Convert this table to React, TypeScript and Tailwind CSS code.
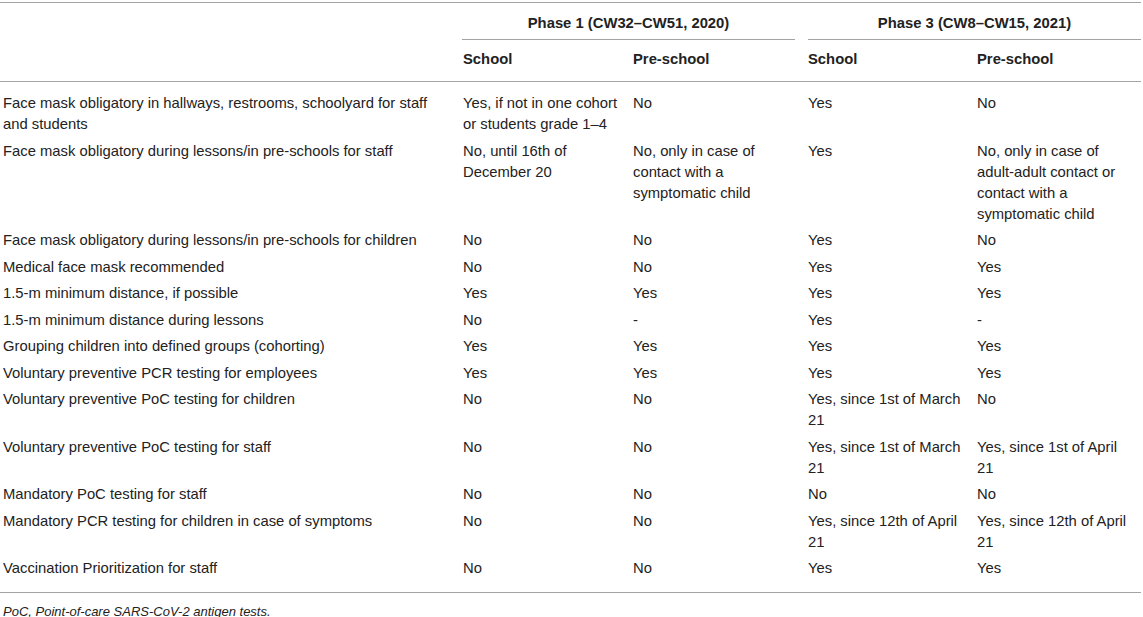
const cols = 'grid grid-cols-[460px_170px_175px_169px_167px]';

// right padding per column, so that lines wrap where the source wraps
const pads = ['pl-[3px] pr-[12px]', 'pl-[3px] pr-[8px]', 'pl-[3px] pr-[13px]', 'pl-[3px] pr-[5px]', 'pl-[3px] pr-[8px]'];

const rows: string[][] = [
  [
    'Face mask obligatory in hallways, restrooms, schoolyard for staff and students',
    'Yes, if not in one cohort or students grade 1–4',
    'No',
    'Yes',
    'No',
  ],
  [
    'Face mask obligatory during lessons/in pre-schools for staff',
    'No, until 16th of December 20',
    'No, only in case of contact with a symptomatic child',
    'Yes',
    'No, only in case of adult-adult contact or contact with a symptomatic child',
  ],
  ['Face mask obligatory during lessons/in pre-schools for children', 'No', 'No', 'Yes', 'No'],
  ['Medical face mask recommended', 'No', 'No', 'Yes', 'Yes'],
  ['1.5-m minimum distance, if possible', 'Yes', 'Yes', 'Yes', 'Yes'],
  ['1.5-m minimum distance during lessons', 'No', '-', 'Yes', '-'],
  ['Grouping children into defined groups (cohorting)', 'Yes', 'Yes', 'Yes', 'Yes'],
  ['Voluntary preventive PCR testing for employees', 'Yes', 'Yes', 'Yes', 'Yes'],
  ['Voluntary preventive PoC testing for children', 'No', 'No', 'Yes, since 1st of March 21', 'No'],
  ['Voluntary preventive PoC testing for staff', 'No', 'No', 'Yes, since 1st of March 21', 'Yes, since 1st of April 21'],
  ['Mandatory PoC testing for staff', 'No', 'No', 'No', 'No'],
  [
    'Mandatory PCR testing for children in case of symptoms',
    'No',
    'No',
    'Yes, since 12th of April 21',
    'Yes, since 12th of April 21',
  ],
  ['Vaccination Prioritization for staff', 'No', 'No', 'Yes', 'Yes'],
];

export default function App() {
  return (
    <div className="min-h-screen bg-white font-['Liberation_Sans',Arial,sans-serif] text-[#222] pt-[2px]">
      <div className="w-[1141px]">
        <div className="border-t border-[#a3a3a3]">
          {/* phase headers */}
          <div className={`${cols} text-[14.8px] leading-[21px] font-bold`}>
            <div />
            <div className="col-span-2">
              <div className="ml-[2px] mr-[10px] pt-[9.5px] pb-[5.5px] border-b border-[#a3a3a3] text-center">
                Phase 1 (CW32–CW51, 2020)
              </div>
            </div>
            <div className="col-span-2">
              <div className="ml-[3px] pt-[9.5px] pb-[5.5px] border-b border-[#a3a3a3] text-center">
                Phase 3 (CW8–CW15, 2021)
              </div>
            </div>
          </div>
          <div className={`${cols} text-[14.8px] leading-[21px] font-bold border-b border-[#a3a3a3]`}>
            <div />
            <div className="pl-[3px] pt-[8.5px] pb-[11px]">School</div>
            <div className="pl-[3px] pt-[8.5px] pb-[11px]">Pre-school</div>
            <div className="pl-[3px] pt-[8.5px] pb-[11px]">School</div>
            <div className="pl-[3px] pt-[8.5px] pb-[11px]">Pre-school</div>
          </div>
        </div>

        <div className="border-b border-[#a3a3a3] text-[14.8px] leading-[21px]">
          {rows.map((row, i) => {
            const first = i === 0;
            const last = i === rows.length - 1;
            return (
              <div key={i} className={cols}>
                {row.map((cell, j) => (
                  <div
                    key={j}
                    className={`${pads[j]} ${first ? 'pt-[11.5px]' : 'pt-[2.5px]'} ${last ? 'pb-[12.5px]' : 'pb-[3px]'}`}
                  >
                    {cell}
                  </div>
                ))}
              </div>
            );
          })}
        </div>

        <p className="pl-[3px] pt-[8.5px] text-[13px] leading-[21px] italic">
          PoC, Point-of-care SARS-CoV-2 antigen tests.
        </p>
      </div>
    </div>
  );
}
